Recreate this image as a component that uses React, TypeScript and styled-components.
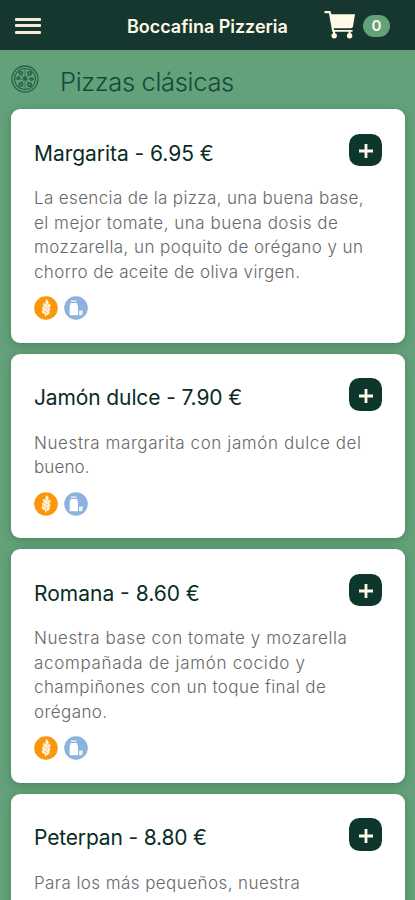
import React from "react";
import styled, { createGlobalStyle } from "styled-components";

const GlobalStyle = createGlobalStyle`
  * { box-sizing: border-box; }
  body {
    margin: 0;
    height: 900px;
    overflow: hidden;
    background: #62a179;
    font-family: Inter, "Liberation Sans", sans-serif;
  }
`;

const Page = styled.div`
  height: 900px;
  overflow: hidden;
  background: #62a179;
`;

const Header = styled.header`
  display: grid;
  grid-template-columns: 127px 1fr auto;
  align-items: center;
  height: 49.5px;
  padding: 0 25px 0 0;
  background: #15372f;
`;

const MenuButton = styled.button`
  display: flex;
  flex-direction: column;
  gap: 3.5px;
  width: 26px;
  margin: 2px 0 0 14.5px;
  padding: 0;
  border: 0;
  background: none;
`;

const MenuBar = styled.span`
  height: 3px;
  border-radius: 1px;
  background: #f2ecd4;
`;

const Brand = styled.h1`
  margin: 4px 0 0;
  color: #fff9e5;
  font-size: 18px;
  font-weight: 600;
  line-height: 24px;
  letter-spacing: -0.03px;
  white-space: nowrap;
`;

const Cart = styled.div`
  display: flex;
  align-items: center;
  gap: 8px;
`;

const CartIcon = styled.svg`
  width: 31px;
  height: 28px;
  fill: #fff9e5;
`;

const CartCount = styled.span`
  width: 27px;
  height: 22px;
  margin-top: 2px;
  border-radius: 11px;
  background: #62a179;
  color: #fff9e5;
  font-size: 15px;
  font-weight: 600;
  line-height: 22px;
  text-align: center;
`;

const SectionHeader = styled.div`
  display: flex;
  align-items: center;
  gap: 21px;
  height: 59.5px;
  padding: 0 11px;
`;

const PizzaIcon = styled.svg`
  width: 28px;
  height: 28px;
  fill: none;
  stroke: #2c6149;
`;

const SectionTitle = styled.h2`
  margin: 6px 0 0;
  color: #17483a;
  font-size: 25.5px;
  font-weight: 300;
  line-height: 32px;
  letter-spacing: -0.34px;
`;

const CardList = styled.main`
  display: flex;
  flex-direction: column;
  gap: 10.8px;
  padding: 0 10.5px 0 11px;
`;

const Card = styled.article`
  flex-shrink: 0;
  padding: 24.5px 22.5px 22.5px 23px;
  border-radius: 9px;
  background: #fff;
  box-shadow: 0 2px 8px rgba(20, 60, 40, 0.28);
`;

const CardHead = styled.div`
  display: flex;
  justify-content: space-between;
  height: 52.8px;
`;

const CardTitle = styled.h3<{ $spacing: number }>`
  margin: 5px 0 0;
  color: #092c24;
  font-size: 21px;
  font-weight: 400;
  line-height: 30px;
  letter-spacing: ${(p) => p.$spacing}px;
  white-space: nowrap;
`;

const AddButton = styled.button`
  display: grid;
  place-items: center;
  width: 33.5px;
  height: 32.5px;
  padding: 3px 0 0 1px;
  border: 0;
  border-radius: 10.5px;
  background: #0d362d;
`;

const PlusIcon = styled.svg`
  width: 14px;
  height: 14px;
  stroke: #fff9e5;
  stroke-width: 2.8;
`;

const Description = styled.p`
  margin: 0;
  color: #686868;
  font-size: 17px;
  font-weight: 300;
  line-height: 24.5px;
`;

const Line = styled.span<{ $spacing: number }>`
  display: block;
  letter-spacing: ${(p) => p.$spacing}px;
  white-space: nowrap;
`;

const Allergens = styled.div`
  display: flex;
  gap: 6px;
  margin-top: 12px;
`;

const AllergenIcon = styled.svg`
  width: 24px;
  height: 24px;
`;

type TextLine = [text: string, spacing: number];

const pizzas: { title: TextLine; lines: TextLine[] }[] = [
  {
    title: ["Margarita - 6.95 €", -0.04],
    lines: [
      ["La esencia de la pizza, una buena base,", 0.36],
      ["el mejor tomate, una buena dosis de", 0.5],
      ["mozzarella, un poquito de orégano y un", 0.42],
      ["chorro de aceite de oliva virgen.", 0.37],
    ],
  },
  {
    title: ["Jamón dulce - 7.90 €", -0.12],
    lines: [
      ["Nuestra margarita con jamón dulce del", 0.59],
      ["bueno.", 0.13],
    ],
  },
  {
    title: ["Romana - 8.60 €", 0],
    lines: [
      ["Nuestra base con tomate y mozarella", 0.57],
      ["acompañada de jamón cocido y", 0.68],
      ["champiñones con un toque final de", 0.42],
      ["orégano.", 0.42],
    ],
  },
  {
    title: ["Peterpan - 8.80 €", -0.16],
    lines: [
      ["Para los más pequeños, nuestra", 0.43],
      ["pizza de jamón con tomate y base de", 0.43],
      ["mozzarella.", 0.43],
    ],
  },
];

const GlutenIcon = () => (
  <AllergenIcon viewBox="0 0 24 24" aria-label="Gluten">
    <circle cx="12" cy="12" r="11.8" fill="#fb970b" />
    <g fill="#fff4de" stroke="#fff4de" strokeWidth=".5">
      <path d="M12.7 3.5c2 1.6 2.3 3.7.6 5.5-2-1.5-2.2-3.7-.6-5.5Z" />
      <path d="M9.5 7.2c2.3.5 3.3 2 2.9 4.3-2.5-.2-3.5-2-2.9-4.3ZM16.2 8c.3 2.3-.8 3.8-3.1 4.2-.2-2.3.9-3.9 3.1-4.2Z" />
      <path d="M8.5 10.8c2.5.3 3.6 1.8 3.4 4.2-2.6-.1-3.8-1.7-3.4-4.2ZM16 11.7c.3 2.3-.9 3.8-3.3 4.2-.2-2.4 1-3.9 3.3-4.2Z" />
      <path d="M8 14.4c2.4.1 3.6 1.4 3.5 3.6-2.5 0-3.8-1.4-3.5-3.6ZM15.6 15.2c.2 2.2-1 3.5-3.3 3.8-.1-2.2 1-3.5 3.3-3.8Z" />
    </g>
    <path d="m12.8 8-1.4 12.5" stroke="#fff4de" strokeWidth="1" />
  </AllergenIcon>
);

const MilkIcon = () => (
  <AllergenIcon viewBox="0 0 24 24" aria-label="Lácteos">
    <circle cx="12" cy="12" r="11.8" fill="#8cb2de" />
    <path d="M7 4.4h5.4v1.5H7z" fill="#e8f0fa" />
    <path d="M6.5 7h6.6v1.2l.9 1.6v9.5H5.7V9.8l.8-1.6Z" fill="#fff" />
    <path d="m15 14.8 4-.6-.8 5H15Z" fill="#e8f0fa" />
  </AllergenIcon>
);

export default function App() {
  return (
    <>
      <GlobalStyle />
      <Page>
        <Header>
          <MenuButton aria-label="Menú">
            <MenuBar />
            <MenuBar />
            <MenuBar />
          </MenuButton>
          <Brand>Boccafina Pizzeria</Brand>
          <Cart>
            <CartIcon viewBox="0 0 31 28">
              <path d="M.5 0h5.8l1.2 3.2H31L29 15.5q-.4 1.7-2 1.7H9.8l.3 1.8h18.4v1.7H8.2L5 2.2H.5Z" />
              <circle cx="10.2" cy="24.8" r="2.7" />
              <circle cx="25.6" cy="24.8" r="2.7" />
              <path d="M9 20h2v4H9zM24.6 20h2v4h-2z" />
            </CartIcon>
            <CartCount>0</CartCount>
          </Cart>
        </Header>
        <SectionHeader>
          <PizzaIcon viewBox="0 0 28 28">
            <circle cx="14" cy="14" r="13" strokeWidth="1.3" />
            <circle cx="14" cy="14" r="10.5" strokeWidth="1.1" />
            <path d="M14 4v20M4 14h20M7 7l14 14M21 7 7 21" strokeWidth=".7" />
            <g strokeWidth="1.5">
              <circle cx="10" cy="8" r="1.5" />
              <circle cx="18.5" cy="8.5" r="1.7" />
              <circle cx="7.5" cy="13" r="1.3" />
              <circle cx="14" cy="13.5" r="1.4" />
              <circle cx="20.5" cy="14" r="1.3" />
              <circle cx="10" cy="19.5" r="1.7" />
              <circle cx="18.5" cy="19.5" r="1.8" />
            </g>
          </PizzaIcon>
          <SectionTitle>Pizzas clásicas</SectionTitle>
        </SectionHeader>
        <CardList>
          {pizzas.map(({ title, lines }) => (
            <Card key={title[0]}>
              <CardHead>
                <CardTitle $spacing={title[1]}>{title[0]}</CardTitle>
                <AddButton aria-label="Añadir">
                  <PlusIcon viewBox="0 0 14 14">
                    <path d="M7 0v14M0 7h14" />
                  </PlusIcon>
                </AddButton>
              </CardHead>
              <Description>
                {lines.map(([text, spacing]) => (
                  <Line key={text} $spacing={spacing}>{text}</Line>
                ))}
              </Description>
              <Allergens>
                <GlutenIcon />
                <MilkIcon />
              </Allergens>
            </Card>
          ))}
        </CardList>
      </Page>
    </>
  );
}
